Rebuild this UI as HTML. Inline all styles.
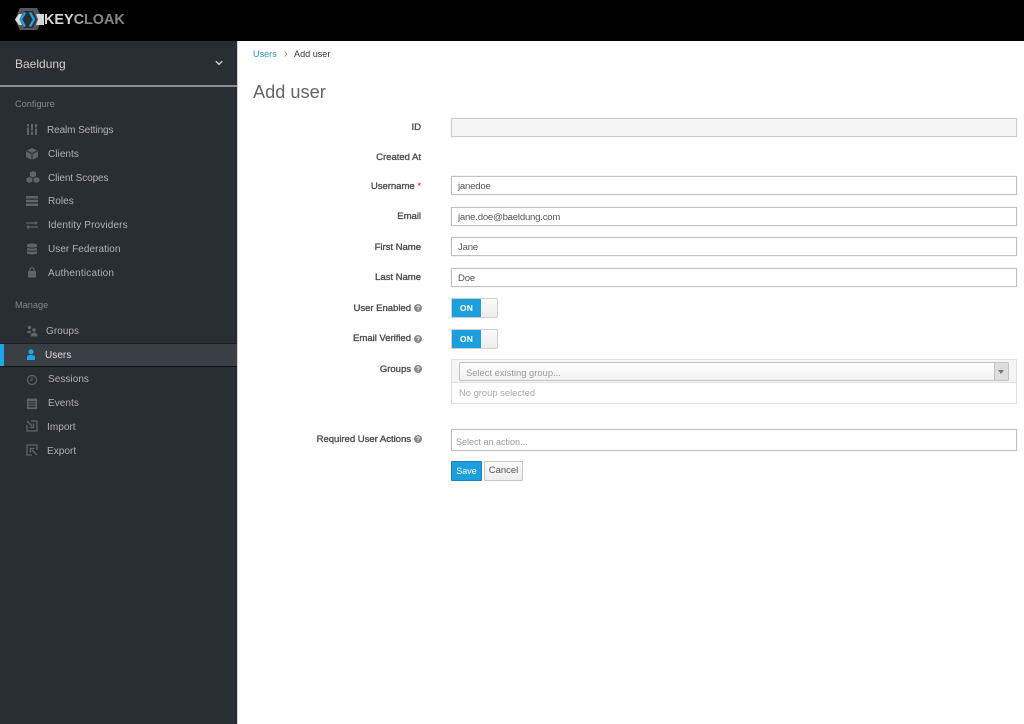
<!DOCTYPE html>
<html><head><meta charset="utf-8"><style>
html,body{margin:0;padding:0;background:#fff}
#p{position:relative;width:1024px;height:724px;overflow:hidden;font-family:"Liberation Sans",sans-serif;font-size:9.6px;color:#363636;background:#fff}
#p div,#p svg{position:absolute}
.n{color:#b0b2b4;font-size:10px;white-space:nowrap;letter-spacing:.05px;line-height:14px;margin-top:1px}
.h{color:#85888a;font-size:9.2px;left:15px;white-space:nowrap;line-height:14px}
.i{left:26px;width:12px;height:12px;overflow:visible}
.l{right:603px;color:#4f4f4f;white-space:nowrap;line-height:14px;font-size:9.6px;letter-spacing:-.05px;-webkit-text-stroke:.35px #4f4f4f;margin-top:1px}
.lq{right:613px}
.f{left:451px;width:564px;height:17px;border:1px solid #c2c2c2;background:#fff;line-height:19px;text-indent:6px;color:#555;letter-spacing:-.22px;box-shadow:0 0 1px #ccc}
.q{width:8px;height:8px;overflow:visible}
.t{left:451px;width:45px;height:18px;border:1px solid #cfcfcf;border-radius:2px;background:linear-gradient(#fafafa,#ededed)}
.o{left:0;top:0;width:29px;height:18px;background:#1c9fdc;color:#fff;font-weight:bold;font-size:8.5px;line-height:18px;text-align:center;letter-spacing:.2px}
</style></head><body><div id="p">
<div style="left:0;top:0;width:1024px;height:41px;background:#000"></div>
<svg style="left:0;top:0" width="50" height="40" viewBox="0 0 50 40">
<path d="M20 8H37L43 19.500 37 30H20L15 19.500Z" fill="#55585c"/>
<path d="M24 11H33L37 19.500 33 28H24L20 19.500Z" fill="#2b2e31"/>
<path d="M15 19.500L19 14H22L19.500 19.500 22 25H19Z" fill="#ddd"/>
<path d="M36 14H44V25H36L38 19.500Z" fill="#d8d8d8"/>
<path d="M25 12.500L21 19.500 25 26.500" fill="none" stroke="#1f9fe6" stroke-width="2.400"/>
<path d="M30 12.500L34 19.500 30 26.500" fill="none" stroke="#1f9fe6" stroke-width="2.400"/>
</svg>
<div style="left:44px;top:10px;font:bold 14.4px/20px 'Liberation Sans',sans-serif;color:#858585;white-space:nowrap"><span style="color:#d8d8d8">KEY</span><span style="color:#a8a8a8">C</span>LOAK</div>

<div style="left:0;top:41px;width:237px;height:683px;background:#292e34"></div>
<div style="left:237px;top:41px;width:1px;height:683px;background:#d1d1d1"></div>
<div style="left:0;top:85px;width:237px;height:2px;background:#8c8f91"></div>
<div style="left:15px;top:56px;font-size:12px;line-height:17px;color:#cfcfcf">Baeldung</div>
<svg style="left:215px;top:60px" width="8" height="6" viewBox="0 0 8 6"><path d="M.8 1.200L4 4.300 7.200 1.200" fill="none" stroke="#d8d8d8" stroke-width="1.300"/></svg>
<div class="h" style="top:97px">Configure</div>
<div class="n" style="left:47px;top:123px;letter-spacing:-.1px">Realm Settings</div>
<div class="n" style="left:48px;top:147px">Clients</div>
<div class="n" style="left:48px;top:171px;letter-spacing:-.1px">Client Scopes</div>
<div class="n" style="left:48px;top:194px">Roles</div>
<div class="n" style="left:48px;top:218px;letter-spacing:.14px">Identity Providers</div>
<div class="n" style="left:48px;top:242px">User Federation</div>
<div class="n" style="left:48px;top:266px;letter-spacing:.2px">Authentication</div>
<svg class="i" style="top:124px" viewBox="0 0 12 12"><path d="M2 0V11M6 0V11M10 0V11" stroke="#606367" stroke-width="2"/><path d="M1 3H3M5 7H7M9 4H11" stroke="#292e34"/></svg>
<svg class="i" style="top:148px" viewBox="0 0 12 12"><path d="M6 0L12 3V9L6 12 0 9V3Z" fill="#606367"/><path d="M0.500 3L6 5.500 11.500 3M6 5.500V12" stroke="#292e34" fill="none"/></svg>
<svg class="i" style="top:171px;width:14px" viewBox="0 0 14 12"><path d="M7 0L10 1.500V5L7 6.500 4 5V1.500ZM3.500 6L6.500 7.500V10.500L3.500 12 .5 10.500V7.500ZM10.500 6L13.500 7.500V10.500L10.500 12 7.500 10.500V7.500Z" fill="#606367"/></svg>
<svg class="i" style="top:195px" viewBox="0 0 12 12"><path d="M0 1H12V3.500H0ZM0 4.800H12V7.200H0ZM0 8.500H12V11H0Z" fill="#606367"/></svg>
<svg class="i" style="top:219px" viewBox="0 0 12 12"><path d="M0 4H10M12 8H2" stroke="#606367" stroke-width="1.300"/><path d="M9 2L12 4 9 6ZM3 6L0 8 3 10Z" fill="#606367"/></svg>
<svg class="i" style="top:243px" viewBox="0 0 12 12"><path d="M1 1.500Q6-.5 11 1.500V3.800Q6 5.500 1 3.800ZM1 4.800Q6 6.500 11 4.800V7Q6 8.500 1 7ZM1 8Q6 9.500 11 8V10.500Q6 12.500 1 10.500Z" fill="#606367"/></svg>
<svg class="i" style="top:266px" viewBox="0 0 12 12"><path d="M2 5H10V11.500H2Z" fill="#606367"/><path d="M4 5V3Q6 0 8 3V5" stroke="#606367" stroke-width="1.300" fill="none"/></svg>

<div class="h" style="top:298px">Manage</div>
<div class="n" style="left:46px;top:324px">Groups</div>
<svg class="i" style="top:325px" viewBox="0 0 12 12"><circle cx="3.500" cy="2.500" r="1.800" fill="#606367"/><circle cx="8" cy="5" r="1.800" fill="#606367"/><path d="M1 8Q1 5.500 3.500 5.500L5 6V8ZM4.500 11.500Q4.500 7.500 8 7.500T11.500 11.500Z" fill="#606367"/></svg>
<div style="left:0;top:343px;width:237px;height:22px;background:#393f44;border-top:1px solid #1c2024;border-bottom:1px solid #111"></div>
<div style="left:0;top:344px;width:4px;height:22px;background:#1ba7ea"></div>
<svg class="i" style="top:349px" viewBox="0 0 12 12"><circle cx="5" cy="2.800" r="2.500" fill="#1ba7ea"/><path d="M1 11V8Q1 6 5 6T9 8V11Z" fill="#1ba7ea"/></svg>
<div class="n" style="left:45px;top:348px;color:#e0e0e0">Users</div>
<div class="n" style="left:48px;top:372px">Sessions</div>
<div class="n" style="left:48px;top:396px">Events</div>
<div class="n" style="left:47px;top:420px">Import</div>
<div class="n" style="left:47px;top:444px">Export</div>
<svg class="i" style="top:374px" viewBox="0 0 12 12"><circle cx="6" cy="6" r="4.500" fill="none" stroke="#606367" stroke-width="1.200"/><path d="M6 3V6.300H3.800" fill="none" stroke="#606367"/></svg>
<svg class="i" style="top:397px" viewBox="0 0 12 12"><path d="M1 1.500H11V12H1Z" fill="#606367"/><path d="M2 4.500H10M2 7H10M2 9.500H10M4 4V11M6 4V11M8 4V11" stroke="#292e34" stroke-width=".7"/></svg>
<svg class="i" style="top:420px" viewBox="0 0 12 12"><path d="M5 1H11V11H1V5" fill="none" stroke="#606367" stroke-width="1.300"/><path d="M1 1L6 6M7.500 3.500V7.500H3.500" fill="none" stroke="#606367" stroke-width="1.300"/></svg>
<svg class="i" style="top:444px" viewBox="0 0 12 12"><path d="M11 6V1H1V11H6" fill="none" stroke="#606367" stroke-width="1.300"/><path d="M11 11L6 6M4.500 8.500V4.500H8.500" fill="none" stroke="#606367" stroke-width="1.300"/></svg>

<div style="left:253px;top:47px;line-height:14px;font-size:9.1px;color:#2a93cf">Users</div>
<svg style="left:284px;top:51px" width="4" height="6" viewBox="0 0 4 6"><path d="M.5.500L3 3 .5 5.500" fill="none" stroke="#9c9c9c" stroke-width=".8"/></svg>
<div style="left:294px;top:47px;line-height:14px;font-size:9.1px;color:#363636">Add user</div>
<div style="left:253px;top:81px;font-size:18.2px;line-height:23px;color:#666">Add user</div>

<div class="l" style="top:120px">ID</div>
<div class="l" style="top:150px">Created At</div>
<div class="l" style="top:179px">Username <span style="color:#c00;-webkit-text-stroke:0">*</span></div>
<div class="l" style="top:209px">Email</div>
<div class="l" style="top:240px">First Name</div>
<div class="l" style="top:270px">Last Name</div>
<div class="l lq" style="top:301px">User Enabled</div>
<div class="l lq" style="top:331px">Email Verified</div>
<div class="l lq" style="top:362px">Groups</div>
<div class="l lq" style="top:432px">Required User Actions</div>
<svg class="q" style="left:414px;top:304px" viewBox="0 0 8 8"><circle cx="4" cy="4" r="4" fill="#8a8a8a"/><path d="M2.800 3Q3 1.800 4.200 1.900 5.400 2 5.200 3.200 5 3.800 4 4.300V5" fill="none" stroke="#fff" stroke-width=".8"/><path d="M3.600 5.600H4.500V6.500H3.600Z" fill="#fff"/></svg>
<svg class="q" style="left:414px;top:335px" viewBox="0 0 8 8"><circle cx="4" cy="4" r="4" fill="#8a8a8a"/><path d="M2.800 3Q3 1.800 4.200 1.900 5.400 2 5.200 3.200 5 3.800 4 4.300V5" fill="none" stroke="#fff" stroke-width=".8"/><path d="M3.600 5.600H4.500V6.500H3.600Z" fill="#fff"/></svg>
<svg class="q" style="left:414px;top:365px" viewBox="0 0 8 8"><circle cx="4" cy="4" r="4" fill="#8a8a8a"/><path d="M2.800 3Q3 1.800 4.200 1.900 5.400 2 5.200 3.200 5 3.800 4 4.300V5" fill="none" stroke="#fff" stroke-width=".8"/><path d="M3.600 5.600H4.500V6.500H3.600Z" fill="#fff"/></svg>
<svg class="q" style="left:414px;top:435px" viewBox="0 0 8 8"><circle cx="4" cy="4" r="4" fill="#8a8a8a"/><path d="M2.800 3Q3 1.800 4.200 1.900 5.400 2 5.200 3.200 5 3.800 4 4.300V5" fill="none" stroke="#fff" stroke-width=".8"/><path d="M3.600 5.600H4.500V6.500H3.600Z" fill="#fff"/></svg>

<div class="f" style="top:118px;background:#f5f5f5;border-color:#cdcdcd"></div>
<div class="f" style="top:176px">janedoe</div>
<div class="f" style="top:207px">jane.doe@baeldung.com</div>
<div class="f" style="top:237px">Jane</div>
<div class="f" style="top:268px">Doe</div>

<div class="t" style="top:298px"><div class="o">ON</div></div>
<div class="t" style="top:329px"><div class="o">ON</div></div>

<div style="left:451px;top:359px;width:564px;height:43px;border:1px solid #e1e1e1;background:#fff"></div>
<div style="left:452px;top:360px;width:564px;height:22px;background:#f5f5f5;border-bottom:1px solid #e1e1e1"></div>
<div style="left:459px;top:362px;width:548px;height:17px;border:1px solid #c2c2c2;border-radius:2px;background:linear-gradient(#fff,#f1f1f1);line-height:19px;text-indent:6px;font-size:9.4px;color:#999">Select existing group...</div>
<div style="left:994px;top:362px;width:13px;height:17px;border:1px solid #c2c2c2;border-radius:0 2px 2px 0;background:#dedede"></div>
<svg style="left:998px;top:370px" width="6" height="5" viewBox="0 0 6 5"><path d="M0 0H6L3 4Z" fill="#777"/></svg>
<div style="left:459px;top:386px;line-height:14px;font-size:9.4px;color:#a8a8a8">No group selected</div>

<div class="f" style="top:429px;height:20px;line-height:24px;text-indent:4px;font-size:9px;letter-spacing:0;color:#999">Select an action...</div>

<div style="left:451px;top:461px;width:29px;height:18px;border:1px solid #1583bb;border-radius:1px;background:#1c9fdc;color:#fff;line-height:18px;text-align:center;font-size:9px">Save</div>
<div style="left:484px;top:461px;width:37px;height:18px;border:1px solid #c6c6c6;border-radius:1px;background:linear-gradient(#fafafa,#ededed);color:#4d5258;line-height:18px;text-align:center;font-size:9.5px">Cancel</div>
</div></body></html>
